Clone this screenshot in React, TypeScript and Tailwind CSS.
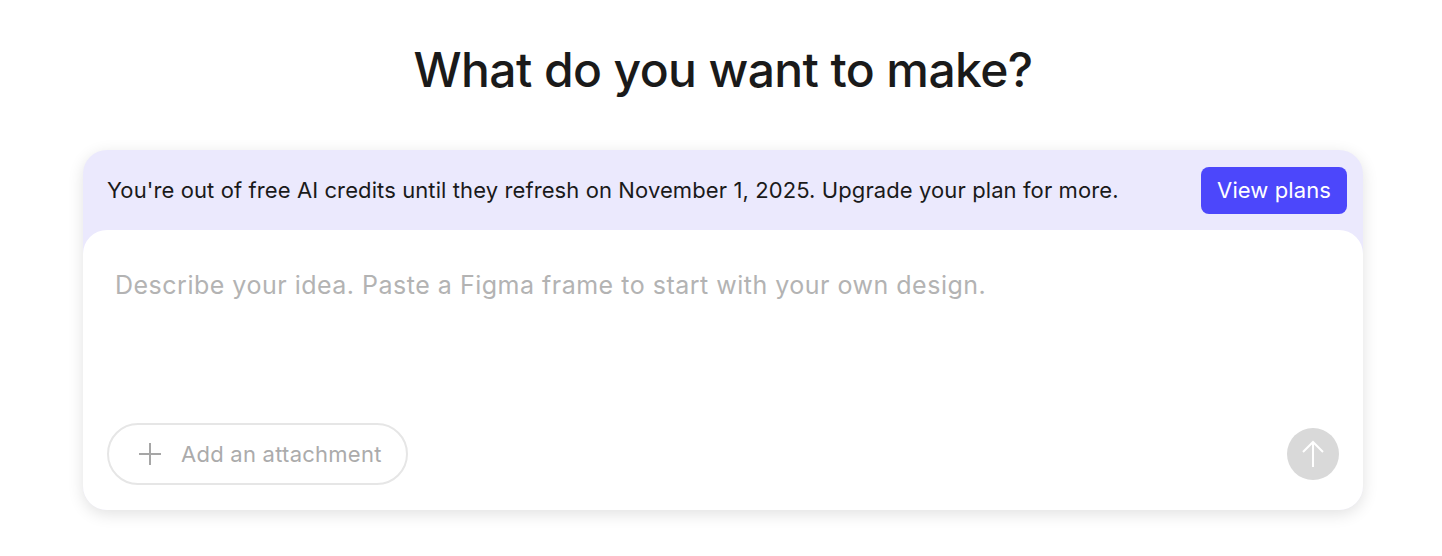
import React from "react";

export default function App() {
  return (
    <div className="w-[1442px] h-[556px] bg-white flex flex-col items-center pl-[4px]" style={{ fontFamily: "Inter, 'Noto Sans', sans-serif" }}>
      <h1 className="mt-[40px] text-[48px] leading-[60px] font-medium text-[#1a1a1a] tracking-[-0.6px]">What do you want to make?</h1>
      <div className="mt-[50px] w-[1280px] rounded-[24px] bg-[#ebe9fd] shadow-[0_4px_16px_rgba(0,0,0,0.12)] flex flex-col">
        <div className="h-[80px] flex items-center justify-between pl-[24px] pr-[16px]">
          <span className="text-[22px] tracking-[0.1px] text-[#1a1a1a] mt-[1px]">You're out of free AI credits until they refresh on November 1, 2025. Upgrade your plan for more.</span>
          <button className="h-[47px] px-[16px] rounded-[8px] bg-[#4c47fb] text-white text-[22px] tracking-[0.1px]">View plans</button>
        </div>
        <div className="h-[280px] bg-white rounded-[24px] flex flex-col justify-between pt-[39px] pb-[25px] pl-[32px] pr-[24px]">
          <div className="text-[25px] leading-[32px] tracking-[0.5px] text-[#b3b3b3]">Describe your idea. Paste a Figma frame to start with your own design.</div>
          <div className="flex items-center justify-between">
            <button className="-ml-[8px] h-[62px] w-[301px] rounded-full border-2 border-[#e6e6e6] flex items-center pl-[29px] gap-[19px] text-[22px] tracking-[0.25px] text-[#ababab]">
              <svg width="24" height="24" viewBox="0 0 24 24" fill="none" stroke="#a6a6a6" strokeWidth="2"><path d="M12 1v22M1 12h22" /></svg>
              <span>Add an attachment</span>
            </button>
            <div className="w-[52px] h-[52px] rounded-full bg-[#d9d9d9] flex items-center justify-center">
              <svg width="26" height="30" viewBox="0 0 26 30" fill="none" stroke="white" strokeWidth="2"><path d="M13 28V3M3 13L13 3l10 10" /></svg>
            </div>
          </div>
        </div>
      </div>
    </div>
  );
}
